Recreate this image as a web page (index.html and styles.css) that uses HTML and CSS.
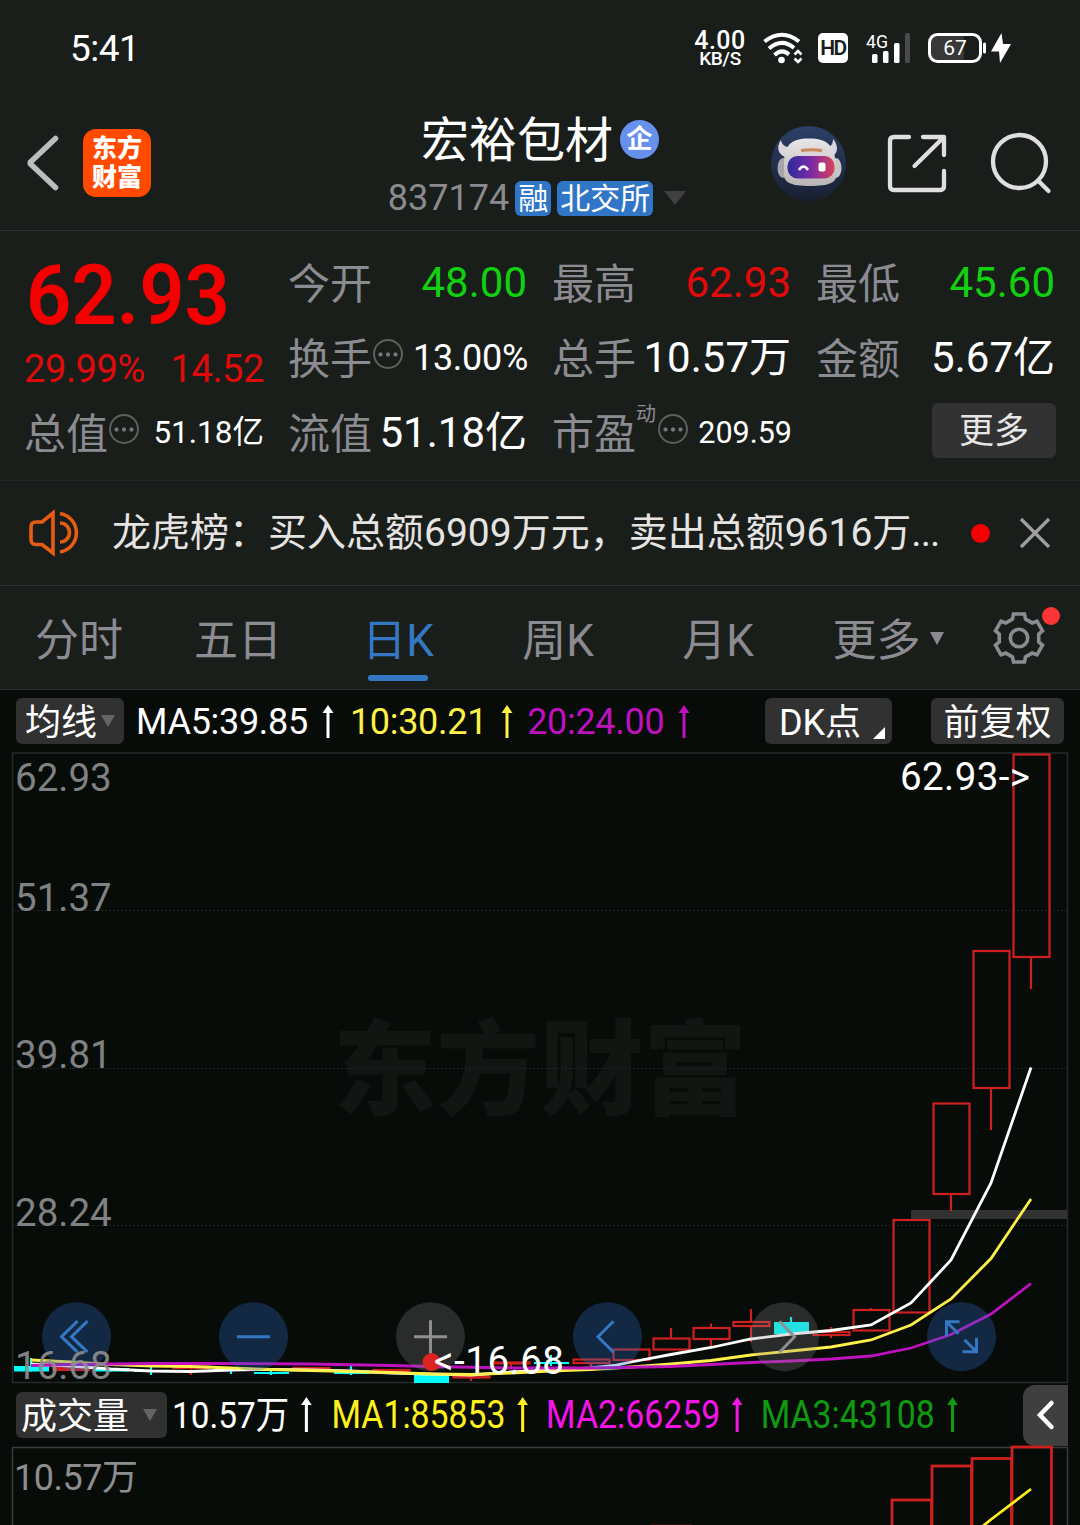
FILE: index.html
```
<!DOCTYPE html>
<html lang="zh-CN">
<head>
    <meta charset="UTF-8">
    <meta name="viewport" content="width=device-width, initial-scale=1.0">
    <title>宏裕包材 837174</title>
    <link rel="stylesheet" href="styles.css">
</head>
<body>
    <!-- 状态栏 -->
    <div class="status-bar">
        <span class="clock">5:41</span>
        <div class="status-icons">
            <div class="net-speed"><b>4.00</b><span>KB/S</span></div>
            <svg class="wifi" width="40" height="32" viewBox="0 0 40 32" fill="none" stroke="#fff" stroke-width="4">
                <path d="M1.5 9.5Q19 -4 36 9.5"/>
                <path d="M6 16.500Q19 5.500 31 16"/>
                <path d="M11.500 23Q19 16 26 22.500"/>
                <circle cx="18.500" cy="28" r="3.300" fill="#fff" stroke="none"/>
                <path d="M31.500 22.500L35 19l3.500 3.500M31.500 26.500L35 30l3.500-3.500" stroke-width="2.600"/>
            </svg>
            <span class="hd">HD</span>
            <svg class="signal" width="46" height="32" viewBox="0 0 46 32">
                <text x="0" y="16" class="signal-text" textLength="22" lengthAdjust="spacingAndGlyphs">4G</text>
                <rect x="6" y="22" width="5.500" height="9" rx="1.500" fill="#fff"/>
                <rect x="17" y="19" width="5.500" height="12" rx="1.500" fill="#fff"/>
                <rect x="28" y="11" width="5.500" height="20" rx="1.500" fill="#fff"/>
                <rect x="39" y="1" width="5" height="30" rx="1.500" fill="#4a4a4a"/>
            </svg>
            <svg class="battery" width="84" height="32" viewBox="0 0 84 32">
                <rect x="3" y="3" width="33" height="26" rx="4" fill="#373837"/>
                <rect x="1.500" y="2.500" width="51" height="27" rx="8" fill="none" stroke="#fff" stroke-width="3"/>
                <rect x="55" y="10.500" width="3" height="11" rx="1.500" fill="#fff"/>
                <text x="27" y="23.300" class="battery-text">67</text>
                <path d="M73.500 1L63 19.500h8L72 31 83 12h-8z" fill="#fff"/>
            </svg>
        </div>
    </div>

    <!-- 标题栏 -->
    <header class="header">
        <div class="header-left">
            <svg width="34" height="56" viewBox="0 0 34 56" fill="none" stroke="#bdbdbd" stroke-width="5.500" stroke-linecap="round" stroke-linejoin="bevel">
                <path d="M29.500 3.500L3.500 28 29.500 52.500"/>
            </svg>
            <div class="app-logo">东方<br>财富</div>
        </div>
        <div class="header-title">
            <div class="stock-name">宏裕包材<span class="corp-badge">企</span></div>
            <div class="stock-code">
                <span>837174</span>
                <span class="tag">融</span>
                <span class="tag">北交所</span>
                <i class="arrow-down"></i>
            </div>
        </div>
        <div class="header-right">
            <svg width="76" height="76" viewBox="0 0 76 76">
                <defs>
                    <linearGradient id="avatarBg" x1="0" y1="0" x2="0" y2="1">
                        <stop offset="0" stop-color="#2c4068"/>
                        <stop offset="1" stop-color="#181f31"/>
                    </linearGradient>
                    <linearGradient id="shell" x1="0" y1="0" x2="0" y2="1">
                        <stop offset="0" stop-color="#e9e6e8"/>
                        <stop offset="1" stop-color="#b9b5b6"/>
                    </linearGradient>
                    <linearGradient id="visor">
                        <stop offset="0" stop-color="#2a2c9a"/>
                        <stop offset=".5" stop-color="#7a2aa6"/>
                        <stop offset="1" stop-color="#dc4058"/>
                    </linearGradient>
                </defs>
                <circle cx="37.500" cy="37.500" r="37.500" fill="url(#avatarBg)"/>
                <path d="M10 14c-5 7-3 14 4 17l8-10c-6 1-11-1-12-7zM62 13c6 7 5 14-1 18l-8-10c6 1 9-2 9-8z" fill="#d9d5da"/>
                <ellipse cx="12" cy="42" rx="5.500" ry="10" fill="#a7a5ac"/>
                <ellipse cx="65" cy="42" rx="5.500" ry="10" fill="#c9c6ca"/>
                <path d="M13 38C13 20 19 12.500 38 12.500S63 20 65 38v12c0 6-6 10-26 10S14 56 13 50z" fill="url(#shell)"/>
                <path d="M30 24.500q10-1.500 21 0" fill="none" stroke="#c98a5a" stroke-width="3"/>
                <rect x="16.500" y="30" width="47" height="22.500" rx="10" fill="url(#visor)"/>
                <path d="M28 44q4.500-7 9 0" fill="none" stroke="#fff" stroke-width="2.500"/>
                <rect x="47.500" y="36.500" width="7" height="9" rx="2" fill="#fff"/>
            </svg>
            <svg width="60" height="60" viewBox="0 0 60 60" fill="none" stroke="#e0dfdf" stroke-width="4.300" stroke-linecap="round" stroke-linejoin="round">
                <path d="M22 3H7q-4 0-4 4v45q0 4 4 4h46q4 0 4-4V37"/>
                <path d="M36 3h21V21M56 4L27.500 32"/>
            </svg>
            <svg width="62" height="62" viewBox="0 0 62 62" fill="none" stroke="#e0dfdf" stroke-width="4.300" stroke-linecap="round">
                <circle cx="29.500" cy="28.500" r="26.500"/>
                <path d="M48 47.500L58.500 58"/>
            </svg>
        </div>
    </header>

    <!-- 行情数据 -->
    <section class="quote">
        <div class="quote-price">
            <div class="price">62.93</div>
            <div class="change"><span>29.99%</span><span>14.52</span></div>
        </div>
        <div class="cell"><label>今开</label><span class="green">48.00</span></div>
        <div class="cell"><label>最高</label><span class="red">62.93</span></div>
        <div class="cell"><label>最低</label><span class="green">45.60</span></div>
        <div class="cell"><label>换手<i class="info"></i></label><span class="mid">13.00%</span></div>
        <div class="cell"><label>总手</label><span>10.57万</span></div>
        <div class="cell"><label>金额</label><span>5.67亿</span></div>
        <div class="cell"><label>总值<i class="info"></i></label><span class="small">51.18亿</span></div>
        <div class="cell"><label>流值</label><span>51.18亿</span></div>
        <div class="cell"><label>市盈<sup>动</sup><i class="info"></i></label><span class="smaller">209.59</span></div>
        <div class="cell cell-more"><button class="more-button">更多</button></div>
    </section>

    <!-- 龙虎榜提示 -->
    <section class="notice">
        <svg width="52" height="46" viewBox="0 0 52 46" fill="none" stroke="#e65c14" stroke-width="3.600">
            <path d="M24 3v40l-11-8.500H7q-5 0-5-5V17q0-5 5-5h6z"/>
            <path d="M31 3.500a19.500 19.500 0 0 1 0 38.500M31 13a9.500 9.500 0 0 1 0 19"/>
        </svg>
        <p>龙虎榜：买入总额6909万元，卖出总额9616万<span>...</span></p>
        <i class="dot"></i>
        <svg width="30" height="30" viewBox="0 0 30 30" stroke="#a0a0a0" stroke-width="3.200">
            <path d="M1 1l28 28M29 1L1 29"/>
        </svg>
    </section>

    <!-- 周期切换 -->
    <nav class="tabs">
        <a>分时</a>
        <a>五日</a>
        <a class="active">日K</a>
        <a>周K</a>
        <a>月K</a>
        <a class="tab-more">更多<i></i></a>
        <div class="settings">
            <svg width="52" height="52" viewBox="-26 -26 52 52" fill="none" stroke="#8b8b91" stroke-width="3.600">
                <path d="M-5.500-24H5.500L6.500-19 13.200-15.100 18-16.800 23.500-7.200 19.700-3.900V3.900L23.500 7.200 18 16.800 13.200 15.100 6.500 19 5.500 24H-5.500L-6.500 19-13.200 15.100-18 16.800-23.500 7.200-19.700 3.900V-3.900L-23.500-7.200-18-16.800-13.200-15.100-6.500-19z"/>
                <circle r="8.700"/>
            </svg>
            <i class="dot"></i>
        </div>
    </nav>

    <!-- 均线 -->
    <div class="ma-bar">
        <button class="chip chip-ma">均线<i></i></button>
        <div class="ma-values">
            <span class="white">MA5:39.85<svg class="up" viewBox="0 0 12 33"><path d="M6 0l5.500 8H7.500v25h-3V8H.5z"/></svg></span>
            <span class="yellow">10:30.21<svg class="up" viewBox="0 0 12 33"><path d="M6 0l5.500 8H7.500v25h-3V8H.5z"/></svg></span>
            <span class="purple">20:24.00<svg class="up" viewBox="0 0 12 33"><path d="M6 0l5.500 8H7.500v25h-3V8H.5z"/></svg></span>
        </div>
        <button class="chip chip-dk">DK点<i></i></button>
        <button class="chip">前复权</button>
    </div>

    <!-- K线图 -->
    <svg class="chart" id="kline" width="1080" height="633" viewBox="0 751 1080 633">
        <text x="333" y="1107" class="watermark" textLength="414" lengthAdjust="spacingAndGlyphs">东方财富</text>
        <path class="grid" d="M13 910.500H1067M13 1068.500H1067M13 1225.500H1067"/>
        <rect class="frame" x="12.500" y="753" width="1055" height="629.500"/>
        <rect x="911" y="1210" width="156" height="9" fill="#323232"/>
        <g id="candles"></g>
        <g id="lines"></g>
        <g id="controls"></g>
        <g class="axis">
            <text x="15" y="791">62.93</text>
            <text x="15" y="911">51.37</text>
            <text x="15" y="1068">39.81</text>
            <text x="15" y="1226">28.24</text>
            <text x="15" y="1379">16.68</text>
        </g>
        <circle cx="431.500" cy="1362" r="9" fill="#dc2222"/>
        <text class="mark" x="434" y="1374" textLength="130">&lt;-16.68</text>
        <text class="mark" x="900" y="789.500" textLength="130">62.93-&gt;</text>
    </svg>

    <!-- 成交量 -->
    <div class="vol-bar">
        <button class="chip chip-vol">成交量<i></i></button>
        <div class="vol-values">
            <span class="white">10.57万<svg class="up" viewBox="0 0 12 35"><path d="M6 0l6 8H7.700v27H4.300V8H0z"/></svg></span>
            <span class="vol-yellow">MA1:85853<svg class="up" viewBox="0 0 12 35"><path d="M6 0l6 8H7.700v27H4.300V8H0z"/></svg></span>
            <span class="vol-pink">MA2:66259<svg class="up" viewBox="0 0 12 35"><path d="M6 0l6 8H7.700v27H4.300V8H0z"/></svg></span>
            <span class="vol-green">MA3:43108<svg class="up" viewBox="0 0 12 35"><path d="M6 0l6 8H7.700v27H4.300V8H0z"/></svg></span>
        </div>
        <button class="side-tab">
            <svg width="18" height="30" viewBox="0 0 18 30" fill="none" stroke="#fff" stroke-width="4.500" stroke-linecap="round"><path d="M14.500 3L3 15l11.500 12"/></svg>
        </button>
    </div>
    <svg class="chart" width="1080" height="79" viewBox="0 1446 1080 79">
        <path d="M12.500 1530V1447.500H1067.500V1530" fill="none" stroke="#3b3d3c" stroke-width="1.500"/>
        <path d="M650 1525h42" stroke="#5a1010"/>
        <g id="volumes"></g>
        <polyline points="978,1530 991,1519.500 1031,1489" fill="none" stroke="#ffee22" stroke-width="2.800"/>
        <text x="14" y="1490" class="vol-label" textLength="124">10.57万</text>
    </svg>

    <script>
        // 每根K线: 中心x, 实体上沿, 实体下沿, 最高, 最低, 颜色
        const candles = [
            [31, 1366, 1371.5, 1358, 1371, 'c'],
            [71, 1368, 1370, 1368, 1370, 'r'],
            [111, 1368, 1371.5, 1368, 1371, 'c'],
            [151, 1370.5, 1372, 1367, 1375, 'c'],
            [191, 1366.5, 1368, 1367, 1375, 'r'],
            [231, 1369, 1370.5, 1369, 1374, 'c'],
            [271, 1372, 1374, 1370, 1375, 'c'],
            [311, 1368, 1369.5, 1367, 1370, 'r'],
            [351, 1372, 1374, 1366, 1375, 'c'],
            [391, 1370, 1371.5, 1369, 1372, 'r'],
            [431, 1374, 1383, 1374, 1383, 'c'],
            [471, 1376.5, 1377.5, 1375, 1381, 'r'],
            [511, 1362.5, 1363.5, 1362, 1368, 'r'],
            [551, 1362, 1364, 1355, 1366, 'c'],
            [591, 1359.5, 1363, 1359, 1368, 'r'],
            [631, 1349.5, 1360, 1349, 1360, 'r'],
            [671, 1338.5, 1349.5, 1328, 1349, 'r'],
            [711, 1328, 1339, 1323.5, 1347, 'r'],
            [751, 1322, 1326, 1309, 1342, 'r'],
            [791, 1322, 1334, 1317, 1334, 'c'],
            [831, 1332, 1335, 1327, 1338, 'r'],
            [871, 1310, 1330.5, 1308, 1331, 'r'],
            [911, 1220, 1312.5, 1220, 1312, 'r'],
            [951, 1103.5, 1194, 1103, 1211, 'r'],
            [991, 951, 1088, 951, 1130, 'r'],
            [1031, 754.5, 957, 754, 989, 'r']
        ];

        // 均线坐标
        const lines = [
            { color: '#ffffff', points: '31,1364 71,1366 111,1369 151,1371 191,1371.500 231,1370 271,1369.500 311,1370 351,1371 391,1373 431,1374 471,1375 511,1372 551,1370 591,1368 614,1365.500 631,1362 671,1354.500 711,1347.500 751,1339 791,1334 831,1330.500 871,1325 911,1303 951,1260 991,1183 1031,1067.500' },
            { color: '#fff04a', points: '31,1360 71,1362 111,1364.500 151,1366 191,1366.500 231,1368 271,1369.500 311,1370.500 351,1371.500 391,1372.500 431,1374 471,1374.500 511,1373 551,1371 591,1369.500 631,1367 671,1364 711,1360.500 751,1355 791,1351 831,1347 871,1340 911,1325 951,1299 991,1258.500 1031,1199' },
            { color: '#bd12bd', points: '31,1365.500 71,1364.500 111,1364 151,1363.500 231,1363.500 311,1364 391,1365.500 431,1366.500 511,1368 591,1368 671,1366.500 711,1364.500 751,1362.500 791,1361 831,1359 871,1356 911,1348 951,1334.500 991,1314 1031,1283.500' }
        ];

        // 图表下方的操作按钮
        const controls = [
            { icon: 'M1-15.500L-15 0 1 15.500M11-15.500L-5 0 11 15.500', on: true },
            { icon: 'M-16.500 0H16.500', on: true },
            { icon: 'M-16.500 0H16.500M0-16.500V16.500', on: false },
            { icon: 'M6-15.500L-9.500 0 6 15.500', on: true },
            { icon: 'M-5-15.500L10 0-5 15.500', on: false },
            { icon: 'M-2-15H-15V-1M-15-15L-3-3M1 15H15V1M15 15L3 3', on: true }
        ];

        // 成交量柱: x, 上沿
        const volumes = [[892, 1500], [932, 1466], [972, 1458.500], [1012, 1447]];

        function renderCandles() {
            const box = document.getElementById('candles');
            candles.forEach(([x, top, bottom, high, low, type]) => {
                const color = type === 'c' ? '#00ffff' : '#cf2020';
                const height = bottom - top;
                if (type === 'c') {
                    box.innerHTML += `<rect x="${x - 17}" y="${top}" width="35" height="${height}" fill="${color}"/>`;
                } else {
                    box.innerHTML += `<rect x="${x - 17.5}" y="${top}" width="36" height="${height}" fill="none" stroke="${color}" stroke-width="2.2"/>`;
                }
                box.innerHTML += `<path d="M${x} ${high}V${top}M${x} ${bottom}V${low}" stroke="${color}" stroke-width="2.200"/>`;
            });
        }

        function renderLines() {
            document.getElementById('lines').innerHTML = lines.map(line =>
                `<polyline points="${line.points}" fill="none" stroke="${line.color}" stroke-width="2.8"/>`
            ).join('');
        }

        function renderControls() {
            document.getElementById('controls').innerHTML = controls.map((item, index) => `
                <g class="${item.on ? 'control' : 'control off'}" transform="translate(${76.5 + index * 177} 1336.7)">
                    <circle r="34.5"/>
                    <path d="${item.icon}"/>
                </g>
            `).join('');
        }

        function renderVolumes() {
            document.getElementById('volumes').innerHTML = volumes.map(([x, top]) =>
                `<rect x="${x}" y="${top}" width="39.5" height="100" fill="none" stroke="#cf2020" stroke-width="2.800"/>`
            ).join('');
        }

        renderCandles();
        renderLines();
        renderControls();
        renderVolumes();
    </script>
</body>
</html>
```
FILE: styles.css
```
body {
    font-family: Roboto, "Noto Sans CJK SC", sans-serif;
    margin: 0;
    padding: 0;
    width: 1080px;
    height: 1525px;
    overflow: hidden;
    background-color: #070c09;
    color: #fff;
}

* {
    box-sizing: border-box;
}

svg {
    display: block;
    flex-shrink: 0;
    overflow: visible;
}

button {
    font-family: inherit;
    border: none;
    padding: 0;
    color: #fff;
}

/* 状态栏 */
.status-bar {
    display: flex;
    justify-content: space-between;
    align-items: center;
    height: 96px;
    padding: 0 68px 0 70px;
    background-color: #1a1e1b;
}

.clock {
    font-size: 37px;
    letter-spacing: -0.5px;
}

.status-icons {
    display: flex;
    align-items: center;
}

.net-speed {
    display: flex;
    flex-direction: column;
    align-items: center;
    width: 54px;
    margin-right: 16px;
    line-height: 18px;
    padding-top: 4px;
}

.net-speed b {
    font-size: 25px;
    font-weight: 500;
    letter-spacing: 0.5px;
}

.net-speed span {
    font-size: 19px;
    font-weight: 500;
    letter-spacing: -0.3px;
}

.hd {
    width: 30px;
    height: 30px;
    margin: 0 18px 0 15px;
    border-radius: 5px;
    background-color: #fff;
    color: #1a1e1b;
    font-size: 21px;
    font-weight: 600;
    line-height: 31px;
    text-align: center;
    letter-spacing: -1.5px;
}

.signal-text {
    font-size: 19px;
    fill: #fff;
}

.battery {
    margin-left: 16px;
}

.battery-text {
    font-size: 21px;
    fill: #fff;
    text-anchor: middle;
}

/* 标题栏 */
.header {
    display: grid;
    grid-template-columns: 270px 540px 270px;
    height: 135px;
    background-color: #1a1e1b;
    border-bottom: 1px solid #2f3230;
}

.header-left {
    display: flex;
    align-items: center;
    padding-left: 26px;
}

.app-logo {
    width: 68px;
    height: 68px;
    margin-left: 23px;
    padding-top: 5px;
    border-radius: 13px;
    background-color: #ff4a00;
    font-size: 25px;
    font-weight: 900;
    line-height: 29px;
    text-align: center;
}

.header-title {
    display: flex;
    flex-direction: column;
    align-items: center;
    padding-top: 13px;
}

.stock-name {
    display: flex;
    align-items: center;
    height: 64px;
    font-size: 48px;
    line-height: 66px;
}

.corp-badge {
    width: 39px;
    height: 39px;
    margin: -3px 0 0 7px;
    border-radius: 50%;
    background-color: #6690ec;
    font-size: 26px;
    font-weight: 700;
    line-height: 39px;
    text-align: center;
}

.stock-code {
    display: flex;
    align-items: center;
    height: 50px;
    margin-left: -6px;
    font-size: 36px;
    color: #8b8b8f;
}

.tag {
    height: 35px;
    margin-left: 6px;
    padding: 0 3px;
    border-radius: 6px;
    background-color: #3176c6;
    color: #fff;
    font-size: 30px;
    line-height: 35px;
}

.arrow-down {
    margin-left: 11px;
    border: 11px solid transparent;
    border-top: 14px solid #3f403f;
    border-bottom: none;
}

.header-right {
    display: flex;
    align-items: center;
    justify-content: flex-end;
    padding: 1px 28px 0 0;
}

.header-right svg + svg {
    margin-left: 40px;
}

.header-right svg + svg + svg {
    margin-left: 43px;
}

/* 行情数据 */
.quote {
    display: grid;
    grid-template-columns: repeat(4, 240px);
    grid-template-rows: repeat(3, 75px);
    column-gap: 24px;
    height: 250px;
    padding: 15px 24px 0;
    background-color: #1a1e1b;
    border-bottom: 1px solid #242725;
}

.quote-price {
    grid-row: span 2;
}

.price {
    width: 210px;
    height: 96px;
    padding-left: 2px;
    color: #f40000;
    font-size: 84px;
    font-weight: 600;
    line-height: 99px;
    transform: scaleX(0.945);
    transform-origin: left;
}

.change {
    display: flex;
    justify-content: space-between;
    color: #e00a0a;
    font-size: 38px;
    line-height: 54px;
    letter-spacing: -0.4px;
}

.cell {
    display: flex;
    justify-content: space-between;
    font-size: 42px;
    line-height: 74px;
    white-space: nowrap;
}

.cell label {
    display: flex;
    color: #8b8b91;
    line-height: 77px;
}

.cell sup {
    width: 21px;
    font-size: 20px;
    line-height: 36px;
    vertical-align: top;
}

.info {
    width: 30px;
    height: 30px;
    margin: 18px 0 0 1px;
    border: 2.5px solid #5f5f5c;
    border-radius: 50%;
    background: radial-gradient(circle, #77777a 1.8px, transparent 2.4px) center / 7.5px 25px repeat-x;
    background-clip: content-box;
    padding: 0 1px;
}

.green {
    color: #10d010;
}

.red {
    color: #e00a0a;
}

.cell span {
    margin-right: 1px;
}

.cell .mid {
    margin-right: 0;
    font-size: 36px;
    letter-spacing: -0.3px;
}

.cell .small {
    margin-right: 0;
    font-size: 31.5px;
}

.cell .smaller {
    margin-right: 0;
    font-size: 30.5px;
}

.cell-more {
    justify-content: flex-end;
}

.more-button {
    width: 124px;
    height: 55px;
    margin-top: 7px;
    border-radius: 6px;
    background-color: #323232;
    color: #e6e6e6;
    font-size: 35px;
    line-height: 57px;
}

/* 龙虎榜提示 */
.notice {
    display: flex;
    align-items: center;
    height: 105px;
    padding-left: 29px;
    background-color: #1a1e1b;
    border-bottom: 1px solid #2f3230;
}

.notice p {
    width: 860px;
    margin: 0 0 0 31px;
    color: #e6e4e2;
    font-size: 39px;
    line-height: 106px;
    white-space: nowrap;
}

.notice p span {
    letter-spacing: -1px;
}

.dot {
    width: 19px;
    height: 19px;
    flex-shrink: 0;
    border-radius: 50%;
    background-color: #f40000;
}

.notice .dot {
    margin: 0 29px 0 -1px;
}

.notice .dot + svg {
    margin-left: 1px;
}

/* 周期切换 */
.tabs {
    display: flex;
    height: 104px;
    padding-left: 0;
    background-color: #1a1e1b;
    border-bottom: 1px solid #2f3230;
}

.tabs a {
    position: relative;
    width: 160px;
    color: #8b8b91;
    font-size: 44px;
    line-height: 110px;
    text-align: center;
}

.tabs a:first-child {
    width: 158px;
}

.tabs .active {
    color: #3478c4;
}

.tabs .active::after {
    content: "";
    position: absolute;
    left: 50px;
    bottom: 8px;
    width: 60px;
    height: 6px;
    border-radius: 3px;
    background-color: #3478c4;
}

.tabs .tab-more {
    width: 180px;
    white-space: nowrap;
}

.tab-more i {
    display: inline-block;
    margin-left: 9px;
    vertical-align: 11px;
    border: 7.5px solid transparent;
    border-top: 13px solid #8b8b91;
    border-bottom: none;
}

.settings {
    position: relative;
    margin: 26px 0 0 14.5px;
}

.settings .dot {
    position: absolute;
    top: -5px;
    right: -15px;
    width: 18px;
    height: 18px;
    background-color: #fb3434;
}

/* 均线 */
.ma-bar, .vol-bar {
    display: flex;
    align-items: center;
    height: 61px;
    padding: 1px 16px 0 16px;
}

.chip {
    height: 46px;
    border-radius: 6px;
    background-color: #303130;
    font-size: 36px;
    line-height: 50px;
    width: 133px;
}

.chip i {
    display: inline-block;
    margin-left: 4px;
    vertical-align: 8px;
    border: 7.5px solid transparent;
    border-top: 12px solid #626562;
    border-bottom: none;
}

.chip-ma {
    width: 108px;
}

.chip-dk {
    width: 127px;
    margin: 0 39px 0 auto;
    padding-left: 7px;
}

.chip-dk i {
    margin-left: 12px;
    vertical-align: -4px;
    border: none;
    border-left: 12px solid transparent;
    border-bottom: 12px solid #fff;
}

.ma-values {
    display: flex;
    gap: 16px;
    margin-left: 12px;
    font-size: 36px;
    line-height: 46px;
    letter-spacing: -0.3px;
    padding-top: 2px;
}

.ma-values span, .vol-values span {
    display: flex;
    align-items: center;
}

.up {
    width: 12px;
    height: 33px;
    margin: -2px 0 0 14px;
    fill: currentColor;
}

.ma-values .purple {
    margin-left: -2px;
}

.white {
    color: #fff;
}

.yellow {
    color: #fff04a;
}

.purple {
    color: #bd12bd;
}

/* 图表 */
.grid {
    stroke: #232524;
    stroke-width: 1;
    stroke-dasharray: 2 2;
}

.frame {
    fill: none;
    stroke: #272928;
    stroke-width: 1.5;
}

.watermark {
    font-size: 103px;
    font-weight: 900;
    fill: #121613;
}

.axis text {
    font-size: 38.5px;
    fill: #8e8e90;
    opacity: 0.9;
}

.mark {
    font-size: 38.5px;
    fill: #fff;
}

.control circle {
    fill: rgba(50, 105, 200, 0.3);
}

.control path {
    fill: none;
    stroke: #3478c4;
    stroke-width: 3;
}

.control.off circle {
    fill: rgba(139, 139, 139, 0.26);
}

.control.off path {
    stroke: #8e8e92;
}

/* 成交量 */
.vol-bar {
    height: 62px;
    padding: 0 0 0 16px;
}

.chip-vol {
    width: 151px;
    flex-shrink: 0;
    text-align: left;
    padding-left: 5px;
}

.chip-vol i {
    margin-left: 14px;
}

.vol-values {
    display: flex;
    gap: 20px;
    width: 851px;
    margin-left: 5px;
    font-size: 38px;
    line-height: 46px;
    white-space: nowrap;
    transform: scaleX(0.89);
    transform-origin: left;
}

.vol-values .up {
    height: 35px;
    margin-left: 13.5px;
}

.vol-values .white {
    margin-right: 2px;
    font-size: 37.5px;
}

.vol-yellow {
    color: #fff01e;
}

.vol-pink {
    color: #f414e8;
}

.vol-green {
    color: #109a10;
}

.side-tab {
    display: flex;
    align-items: center;
    justify-content: center;
    flex-shrink: 0;
    width: 45px;
    height: 61px;
    border-radius: 12px 0 0 12px;
    background-color: #3e3f3e;
}

.vol-label {
    font-size: 36px;
    fill: #8e8e90;
}
```
